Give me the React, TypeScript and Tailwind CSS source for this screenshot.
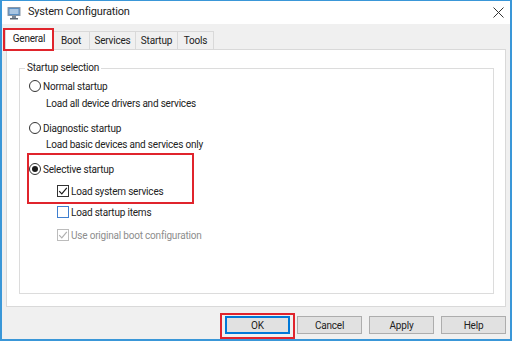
import React from "react";

const font = { fontFamily: "Roboto, 'Liberation Sans', sans-serif" };

function Radio({ checked }: { checked?: boolean }) {
  return (
    <span className="flex h-[12px] w-[12px] shrink-0 items-center justify-center rounded-full border border-[#333333] bg-white">
      {checked && <span className="h-[6px] w-[6px] rounded-full bg-[#1a1a1a]" />}
    </span>
  );
}

function Check({ state }: { state: "checked" | "unchecked" | "disabled" }) {
  const border =
    state === "checked" ? "border-[#333333]" : state === "unchecked" ? "border-[#3f7fcf]" : "border-[#bcbcbc]";
  return (
    <span className={`flex h-[12px] w-[12px] shrink-0 items-center justify-center border bg-white ${border}`}>
      {state !== "unchecked" && (
        <svg width="10" height="10" viewBox="0 0 10 10">
          <path
            d="M1.2 5.2 L3.8 7.8 L8.8 1.8"
            fill="none"
            stroke={state === "checked" ? "#1a1a1a" : "#b0b0b0"}
            strokeWidth="1.2"
          />
        </svg>
      )}
    </span>
  );
}

function AppIcon() {
  return (
    <svg width="14" height="14" viewBox="0 0 14 14">
      <rect x="0.5" y="1" width="13" height="9" rx="0.5" fill="#8a97a6" />
      <rect x="1.5" y="2" width="11" height="7" fill="#5a8fc4" />
      <rect x="2.5" y="3" width="9" height="5" fill="#aac6e2" />
      <rect x="5" y="10" width="4" height="2" fill="#7c8794" />
      <rect x="3" y="12" width="8" height="1.5" fill="#5f6a76" />
    </svg>
  );
}

function Button({ label, primary }: { label: string; primary?: boolean }) {
  return (
    <div
      className={`flex h-[18px] w-[65px] items-center justify-center bg-[#e1e1e1] text-[10px] tracking-[-0.2px] text-[#222] ${
        primary ? "border border-[#0078d7] shadow-[inset_0_0_0_1px_#0078d7]" : "border border-[#adadad]"
      }`}
    >
      {label}
    </div>
  );
}

export default function App() {
  const tabs = [
    { label: "Boot", w: "w-[37px]" },
    { label: "Services", w: "w-[46px]" },
    { label: "Startup", w: "w-[42px]" },
    { label: "Tools", w: "w-[36px]" },
  ];
  return (
    <div style={font} className="relative flex h-[341px] w-[512px] flex-col border-2 border-t border-[#3a97d8] bg-[#f0f0f0] text-[#222]">
      {/* Title bar */}
      <div className="flex h-[23px] shrink-0 items-center bg-white pl-[5px] pr-[6px]">
        <AppIcon />
        <span className="ml-[7px] text-[11px] tracking-[-0.2px] text-[#222]">System Configuration</span>
        <svg className="ml-auto" width="11" height="11" viewBox="0 0 11 11">
          <path d="M0.5 0.5 L10.5 10.5 M10.5 0.5 L0.5 10.5" stroke="#333" strokeWidth="1" />
        </svg>
      </div>

      {/* Tabs */}
      <div className="relative z-10 flex h-[25px] shrink-0 items-end pl-[3px] text-[10px] tracking-[-0.2px]">
        <div className="mb-[-1px] flex h-[22px] w-[48px] items-center justify-center border border-b-0 border-[#d9d9d9] bg-white pb-[2px]">
          General
        </div>
        {tabs.map((t) => (
          <div
            key={t.label}
            className={`flex h-[18px] ${t.w} items-center justify-center border border-b-0 border-l-0 border-[#d9d9d9] bg-[#f0f0f0]`}
          >
            {t.label}
          </div>
        ))}
      </div>

      {/* Panel */}
      <div className="mx-[4px] flex h-[258px] shrink-0 flex-col border border-[#d9d9d9] bg-white pl-[12px] pr-[11px] pt-[18px] pb-[12px]">
        <div className="relative flex-1 border border-[#dcdcdc] pl-[9px] pt-[10px] text-[10px] tracking-[-0.2px]">
          <span className="absolute left-[5px] top-[-8px] bg-white px-[2px] leading-[14px]">Startup selection</span>

          <div className="flex h-[14px] items-center gap-[2px]">
            <Radio />
            <span>Normal startup</span>
          </div>
          <div className="mt-[3px] flex h-[14px] items-center pl-[17px]">Load all device drivers and services</div>

          <div className="mt-[11px] flex h-[14px] items-center gap-[2px]">
            <Radio />
            <span>Diagnostic startup</span>
          </div>
          <div className="mt-[2px] flex h-[14px] items-center pl-[17px]">Load basic devices and services only</div>

          <div className="mt-[11px] flex h-[14px] items-center gap-[2px]">
            <Radio checked />
            <span>Selective startup</span>
          </div>
          <div className="mt-[8px] flex h-[14px] items-center gap-[2px] pl-[28px]">
            <Check state="checked" />
            <span>Load system services</span>
          </div>
          <div className="mt-[7px] flex h-[14px] items-center gap-[2px] pl-[28px]">
            <Check state="unchecked" />
            <span>Load startup items</span>
          </div>
          <div className="mt-[9px] flex h-[14px] items-center gap-[2px] pl-[28px] text-[#8d8d8d]">
            <Check state="disabled" />
            <span>Use original boot configuration</span>
          </div>

          <div className="pointer-events-none absolute left-[7px] top-[84px] h-[51px] w-[167px] border-2 border-[#e0242c]" />
        </div>
      </div>

      {/* Buttons */}
      <div className="mt-[9px] flex justify-end gap-[7px] pr-[4px]">
        <div className="relative">
          <Button label="OK" primary />
          <div className="pointer-events-none absolute left-[-5px] top-[-3px] h-[26px] w-[75px] border-2 border-[#e0242c]" />
        </div>
        <Button label="Cancel" />
        <Button label="Apply" />
        <Button label="Help" />
      </div>

      {/* Red highlight around General tab */}
      <div className="pointer-events-none absolute left-[1px] top-[27px] z-20 h-[23px] w-[51px] border-2 border-[#e0242c]" />
    </div>
  );
}
